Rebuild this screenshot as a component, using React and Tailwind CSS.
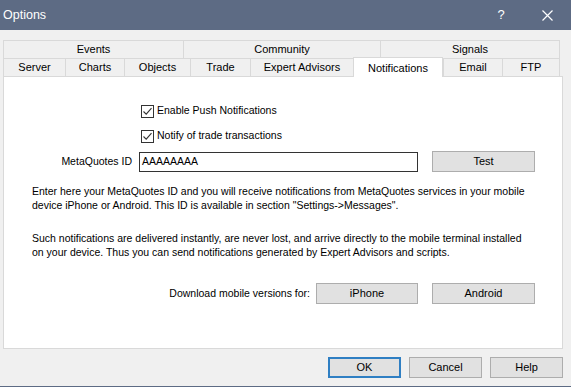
import React from "react";

const font = { fontFamily: '"Liberation Sans", Arial, sans-serif' };

function Check() {
  return (
    <div className="w-[13px] h-[13px] border border-[#333333] bg-white flex items-center justify-center shrink-0">
      <svg width="11" height="11" viewBox="0 0 11 11">
        <path d="M1.5 5.5 L4.2 8.2 L9.5 2.2" fill="none" stroke="#333333" strokeWidth="1.1" />
      </svg>
    </div>
  );
}

function Btn({ children, w, primary }) {
  return (
    <div
      className={
        "h-[21px] flex items-center justify-center bg-[#e1e1e1] text-[11px] text-black " +
        (primary
          ? "border border-[#2f7fc3] shadow-[inset_0_0_0_1px_#2f7fc3]"
          : "border border-[#adadad]")
      }
      style={{ width: w }}
    >
      {children}
    </div>
  );
}

function Tab({ label, w, last }) {
  return (
    <div
      className={
        "h-full flex items-center justify-center border-t border-l border-[#d9d9d9] bg-[#f0f0f0] text-[11px] text-black " +
        (last ? "border-r" : "")
      }
      style={{ width: w }}
    >
      {label}
    </div>
  );
}

export default function App() {
  return (
    <div className="w-[571px] h-[387px] bg-[#f0f0f0] flex flex-col overflow-hidden" style={font}>
      {/* title bar */}
      <div className="h-[30px] bg-[#5d6b84] flex items-center shrink-0">
        <div className="pl-[3px] text-white text-[12.5px] flex-1">Options</div>
        <div className="w-[46px] flex items-center justify-center text-white text-[13px]">?</div>
        <div className="w-[46px] flex items-center justify-center mr-[1px]">
          <svg width="11" height="11" viewBox="0 0 11 11">
            <path d="M0.5 0.5 L10.5 10.5 M10.5 0.5 L0.5 10.5" stroke="#ffffff" strokeWidth="1.2" />
          </svg>
        </div>
      </div>

      <div className="flex-1 flex flex-col px-[3px] pt-[10px]">
        {/* tab row 1 */}
        <div className="flex h-[18px]">
          <Tab label="Events" w={180} />
          <Tab label="Community" w={197} />
          <Tab label="Signals" w={180} last />
        </div>
        {/* tab row 2 */}
        <div className="flex h-[18px] items-start">
          <Tab label="Server" w={62} />
          <Tab label="Charts" w={59} />
          <Tab label="Objects" w={66} />
          <Tab label="Trade" w={60} />
          <Tab label="Expert Advisors" w={103} />
          <div className="relative z-10 -mt-px h-[20px] w-[90px] bg-white border-t border-l border-r border-[#d9d9d9] flex items-start justify-center pt-[2px] text-[11px] text-black">
            Notifications
          </div>
          <Tab label="Email" w={59} />
          <Tab label="FTP" w={58} last />
        </div>

        {/* panel */}
        <div className="w-[560px] h-[273px] bg-white border border-[#d9d9d9] flex flex-col text-[10.5px] text-black">
          <div className="mt-[27px] pl-[137px] flex items-center gap-[3px] h-[14px]">
            <Check />
            <span>Enable Push Notifications</span>
          </div>
          <div className="mt-[11px] pl-[137px] flex items-center gap-[3px] h-[14px]">
            <Check />
            <span>Notify of trade transactions</span>
          </div>
          <div className="mt-[8px] flex items-center h-[21px]">
            <div className="w-[128px] text-right">MetaQuotes ID</div>
            <div className="ml-[7px] w-[279px] h-[20px] border border-[#333333] bg-white flex items-center pl-[2px]">
              AAAAAAAA
            </div>
            <div className="ml-[14px]">
              <Btn w={103}>Test</Btn>
            </div>
          </div>
          <div className="mt-[12px] pl-[28px] leading-[14px] whitespace-nowrap">
            Enter here your MetaQuotes ID and you will receive notifications from MetaQuotes services in your mobile
            <br />
            device iPhone or Android. This ID is available in section "Settings-&gt;Messages".
          </div>
          <div className="mt-[19px] pl-[28px] leading-[14px] whitespace-nowrap">
            Such notifications are delivered instantly, are never lost, and arrive directly to the mobile terminal installed
            <br />
            on your device. Thus you can send notifications generated by Expert Advisors and scripts.
          </div>
          <div className="mt-[24px] flex items-center h-[21px]">
            <div className="w-[312px] text-right pr-[6px]">Download mobile versions for:</div>
            <Btn w={102}>iPhone</Btn>
            <div className="ml-[14px]">
              <Btn w={103}>Android</Btn>
            </div>
          </div>
        </div>

        {/* bottom buttons */}
        <div className="mt-[8px] flex justify-end gap-[8px] pr-[5px]">
          <Btn w={73} primary>OK</Btn>
          <Btn w={73}>Cancel</Btn>
          <Btn w={73}>Help</Btn>
        </div>
      </div>
      <div className="h-[1px] bg-[#5d6b84] shrink-0" />
    </div>
  );
}
